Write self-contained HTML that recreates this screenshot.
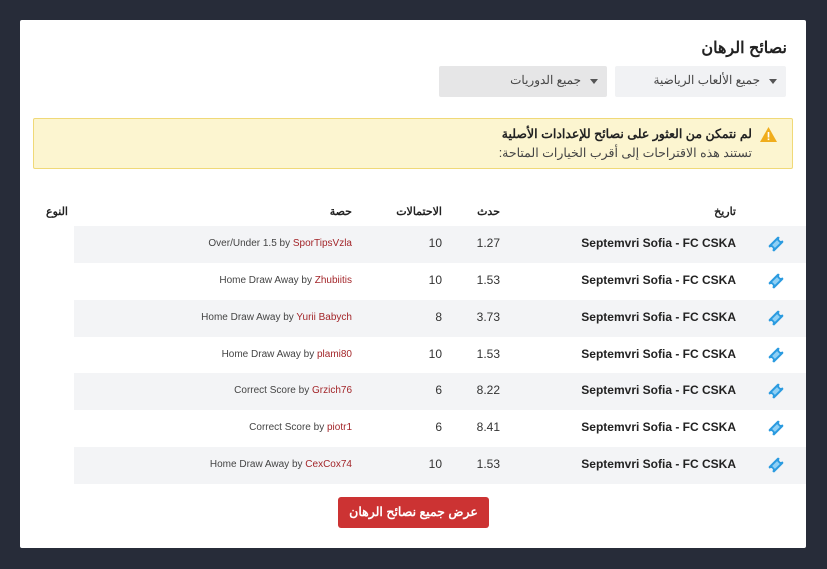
<!DOCTYPE html>
<html><head><meta charset="utf-8"><style>
*{box-sizing:border-box;margin:0;padding:0}
body{width:827px;height:569px;background:#272c39;font-family:"Liberation Sans","Noto Sans CJK SC",sans-serif;position:relative;overflow:hidden}
.card{position:absolute;left:20px;top:20px;width:786px;height:528px;background:#fff;border-radius:2px}
.a{position:absolute}
.t{white-space:nowrap}
.row{position:absolute;left:74px;width:732px;height:37px}
.row.s{background:#f3f4f6}
.m{position:absolute;right:70px;top:10px;font-weight:bold;font-size:12px;color:#222}
.o{position:absolute;right:306px;top:10px;font-size:12px;color:#333}
.p{position:absolute;right:364px;top:10px;font-size:12px;color:#333}
.tip{position:absolute;right:454px;top:12px;font-size:10px;color:#444}
.tip span{color:#a3262a}
.ic{position:absolute;left:692px;top:8px;overflow:visible}
.h{position:absolute;top:205px;font-size:11px;color:#222;font-weight:bold}
</style></head><body>
<div class="card"></div>
<div class="a t" style="right:40px;top:38px;font-size:16px;font-weight:bold;color:#222">نصائح الرهان</div>
<div class="a" style="left:615px;top:66px;width:171px;height:31px;background:#f1f2f4;border-radius:2px"></div>
<div class="a t" style="right:67px;top:73px;font-size:12px;color:#444">جميع الألعاب الرياضية</div>
<div class="a" style="left:769px;top:79px;border:4px solid transparent;border-top:5px solid #555"></div>
<div class="a" style="left:439px;top:66px;width:168px;height:31px;background:#e6e6e7;border-radius:2px"></div>
<div class="a t" style="right:246px;top:73px;font-size:12px;color:#444">جميع الدوريات</div>
<div class="a" style="left:590px;top:79px;border:4px solid transparent;border-top:5px solid #555"></div>
<div class="a" style="left:33px;top:118px;width:760px;height:51px;background:#fcf5d0;border:1px solid #f0d978;border-radius:2px"></div>
<svg class="a" style="left:759px;top:126px" width="19" height="17" viewBox="0 0 19 17"><path d="M9.5 1L18 16H1z" fill="#f0ad1c"/><rect x="8.7" y="6" width="1.6" height="5.5" fill="#fff"/><rect x="8.7" y="12.5" width="1.6" height="1.6" fill="#fff"/></svg>
<div class="a t" dir="rtl" style="right:75px;top:126px;font-size:12.5px;font-weight:bold;color:#222">لم نتمكن من العثور على نصائح للإعدادات الأصلية</div>
<div class="a t" dir="rtl" style="right:75px;top:145px;font-size:12.5px;color:#444">تستند هذه الاقتراحات إلى أقرب الخيارات المتاحة:</div>
<div class="h t" style="right:91px">تاريخ</div>
<div class="h t" style="right:327px">حدث</div>
<div class="h t" style="right:385px">الاحتمالات</div>
<div class="h t" style="right:475px">حصة</div>
<div class="h t" style="right:759px">النوع</div>

<div class="row s" style="top:226px"><div class="m t">Septemvri Sofia - FC CSKA</div><div class="o">1.27</div><div class="p">10</div><div class="tip t">Over/Under 1.5 by <span>SporTipsVzla</span></div><svg class="ic" width="20" height="20" viewBox="0 0 20 20"><g transform="rotate(-45 10 10)"><rect x="3" y="6" width="14" height="8" rx="1" fill="#2b9be0"/><circle cx="3" cy="10" r="1.8" fill="#f3f4f6"/><circle cx="17" cy="10" r="1.8" fill="#f3f4f6"/><rect x="6.5" y="8" width="7" height="4" fill="#8fd0f5"/></g></svg></div>
<div class="row" style="top:263px"><div class="m t">Septemvri Sofia - FC CSKA</div><div class="o">1.53</div><div class="p">10</div><div class="tip t">Home Draw Away by <span>Zhubiitis</span></div><svg class="ic" width="20" height="20" viewBox="0 0 20 20"><g transform="rotate(-45 10 10)"><rect x="3" y="6" width="14" height="8" rx="1" fill="#2b9be0"/><circle cx="3" cy="10" r="1.8" fill="#fff"/><circle cx="17" cy="10" r="1.8" fill="#fff"/><rect x="6.5" y="8" width="7" height="4" fill="#8fd0f5"/></g></svg></div>
<div class="row s" style="top:300px"><div class="m t">Septemvri Sofia - FC CSKA</div><div class="o">3.73</div><div class="p">8</div><div class="tip t">Home Draw Away by <span>Yurii Babych</span></div><svg class="ic" width="20" height="20" viewBox="0 0 20 20"><g transform="rotate(-45 10 10)"><rect x="3" y="6" width="14" height="8" rx="1" fill="#2b9be0"/><circle cx="3" cy="10" r="1.8" fill="#f3f4f6"/><circle cx="17" cy="10" r="1.8" fill="#f3f4f6"/><rect x="6.5" y="8" width="7" height="4" fill="#8fd0f5"/></g></svg></div>
<div class="row" style="top:337px"><div class="m t">Septemvri Sofia - FC CSKA</div><div class="o">1.53</div><div class="p">10</div><div class="tip t">Home Draw Away by <span>plami80</span></div><svg class="ic" width="20" height="20" viewBox="0 0 20 20"><g transform="rotate(-45 10 10)"><rect x="3" y="6" width="14" height="8" rx="1" fill="#2b9be0"/><circle cx="3" cy="10" r="1.8" fill="#fff"/><circle cx="17" cy="10" r="1.8" fill="#fff"/><rect x="6.5" y="8" width="7" height="4" fill="#8fd0f5"/></g></svg></div>
<div class="row s" style="top:373px"><div class="m t">Septemvri Sofia - FC CSKA</div><div class="o">8.22</div><div class="p">6</div><div class="tip t">Correct Score by <span>Grzich76</span></div><svg class="ic" width="20" height="20" viewBox="0 0 20 20"><g transform="rotate(-45 10 10)"><rect x="3" y="6" width="14" height="8" rx="1" fill="#2b9be0"/><circle cx="3" cy="10" r="1.8" fill="#f3f4f6"/><circle cx="17" cy="10" r="1.8" fill="#f3f4f6"/><rect x="6.5" y="8" width="7" height="4" fill="#8fd0f5"/></g></svg></div>
<div class="row" style="top:410px"><div class="m t">Septemvri Sofia - FC CSKA</div><div class="o">8.41</div><div class="p">6</div><div class="tip t">Correct Score by <span>piotr1</span></div><svg class="ic" width="20" height="20" viewBox="0 0 20 20"><g transform="rotate(-45 10 10)"><rect x="3" y="6" width="14" height="8" rx="1" fill="#2b9be0"/><circle cx="3" cy="10" r="1.8" fill="#fff"/><circle cx="17" cy="10" r="1.8" fill="#fff"/><rect x="6.5" y="8" width="7" height="4" fill="#8fd0f5"/></g></svg></div>
<div class="row s" style="top:447px"><div class="m t">Septemvri Sofia - FC CSKA</div><div class="o">1.53</div><div class="p">10</div><div class="tip t">Home Draw Away by <span>CexCox74</span></div><svg class="ic" width="20" height="20" viewBox="0 0 20 20"><g transform="rotate(-45 10 10)"><rect x="3" y="6" width="14" height="8" rx="1" fill="#2b9be0"/><circle cx="3" cy="10" r="1.8" fill="#f3f4f6"/><circle cx="17" cy="10" r="1.8" fill="#f3f4f6"/><rect x="6.5" y="8" width="7" height="4" fill="#8fd0f5"/></g></svg></div>

<div class="a" style="left:338px;top:497px;width:151px;height:31px;background:#cc3333;border-radius:3px"></div>
<div class="a t" style="left:338px;width:151px;text-align:center;top:504px;font-size:12.5px;color:#fff;font-weight:bold">عرض جميع نصائح الرهان</div>
</body></html>
